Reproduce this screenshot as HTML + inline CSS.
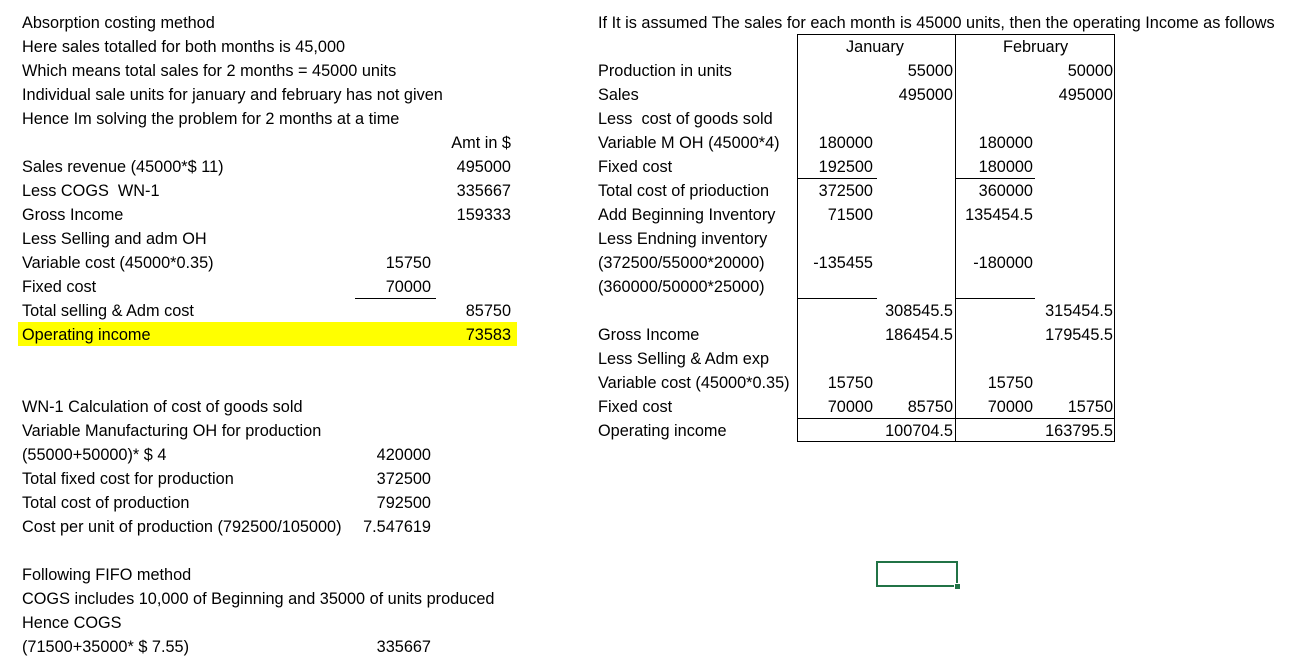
<!DOCTYPE html>
<html><head><meta charset="utf-8"><style>
body{margin:0;width:1293px;height:665px;background:#fff;position:relative;overflow:hidden;font-family:"Liberation Sans",Calibri,sans-serif;font-size:16.3px;color:#000}
.t{position:absolute;height:24px;line-height:26px;white-space:nowrap}
.r{position:absolute;height:24px;line-height:26px;white-space:nowrap;text-align:right;width:150px}
.l{position:absolute;background:#000}
</style></head><body>
<div style="position:absolute;left:18px;top:322px;width:499px;height:24px;background:#ffff00"></div>

<div class="t" style="left:22px;top:10px">Absorption costing method</div>
<div class="t" style="left:22px;top:34px">Here sales totalled for both months is 45,000</div>
<div class="t" style="left:22px;top:58px">Which means total sales for 2 months = 45000 units</div>
<div class="t" style="left:22px;top:82px">Individual sale units for january and february has not given</div>
<div class="t" style="left:22px;top:106px">Hence Im solving the problem for 2 months at a time</div>
<div class="r" style="left:361px;top:130px">Amt in $</div>
<div class="t" style="left:22px;top:154px">Sales revenue (45000*$ 11)</div><div class="r" style="left:361px;top:154px">495000</div>
<div class="t" style="left:22px;top:178px">Less COGS&nbsp; WN-1</div><div class="r" style="left:361px;top:178px">335667</div>
<div class="t" style="left:22px;top:202px">Gross Income</div><div class="r" style="left:361px;top:202px">159333</div>
<div class="t" style="left:22px;top:226px">Less Selling and adm OH</div>
<div class="t" style="left:22px;top:250px">Variable cost (45000*0.35)</div><div class="r" style="left:281px;top:250px">15750</div>
<div class="t" style="left:22px;top:274px">Fixed cost</div><div class="r" style="left:281px;top:274px">70000</div>
<div class="l" style="left:355px;top:298px;width:81px;height:1px"></div>
<div class="t" style="left:22px;top:298px">Total selling &amp; Adm cost</div><div class="r" style="left:361px;top:298px">85750</div>
<div class="t" style="left:22px;top:322px">Operating income</div><div class="r" style="left:361px;top:322px">73583</div>

<div class="t" style="left:22px;top:394px">WN-1 Calculation of cost of goods sold</div>
<div class="t" style="left:22px;top:418px">Variable Manufacturing OH for production</div>
<div class="t" style="left:22px;top:442px">(55000+50000)* $ 4</div><div class="r" style="left:281px;top:442px">420000</div>
<div class="t" style="left:22px;top:466px">Total fixed cost for production</div><div class="r" style="left:281px;top:466px">372500</div>
<div class="t" style="left:22px;top:490px">Total cost of production</div><div class="r" style="left:281px;top:490px">792500</div>
<div class="t" style="left:22px;top:514px">Cost per unit of production (792500/105000)</div><div class="r" style="left:281px;top:514px">7.547619</div>
<div class="t" style="left:22px;top:562px">Following FIFO method</div>
<div class="t" style="left:22px;top:586px">COGS includes 10,000 of Beginning and 35000 of units produced</div>
<div class="t" style="left:22px;top:610px">Hence COGS</div>
<div class="t" style="left:22px;top:634px">(71500+35000* $ 7.55)</div><div class="r" style="left:281px;top:634px">335667</div>

<div class="t" style="left:598px;top:10px">If It is assumed The sales for each month is 45000 units, then the operating Income as follows</div>
<div class="l" style="left:797px;top:34px;width:318px;height:1px"></div>
<div class="l" style="left:797px;top:34px;width:1px;height:408px"></div>
<div class="l" style="left:955px;top:34px;width:1px;height:408px"></div>
<div class="l" style="left:1114px;top:34px;width:1px;height:408px"></div>
<div class="l" style="left:797px;top:441px;width:318px;height:1px"></div>
<div class="l" style="left:797px;top:178px;width:80px;height:1px"></div>
<div class="l" style="left:955px;top:178px;width:80px;height:1px"></div>
<div class="l" style="left:797px;top:298px;width:80px;height:1px"></div>
<div class="l" style="left:955px;top:298px;width:80px;height:1px"></div>
<div class="l" style="left:797px;top:418px;width:318px;height:1px"></div>
<div class="t" style="left:846px;top:34px">January</div>
<div class="t" style="left:1003px;top:34px">February</div>

<div class="t" style="left:598px;top:58px">Production in units</div><div class="r" style="left:803px;top:58px">55000</div><div class="r" style="left:963px;top:58px">50000</div>
<div class="t" style="left:598px;top:82px">Sales</div><div class="r" style="left:803px;top:82px">495000</div><div class="r" style="left:963px;top:82px">495000</div>
<div class="t" style="left:598px;top:106px">Less&nbsp; cost of goods sold</div>
<div class="t" style="left:598px;top:130px">Variable M OH (45000*4)</div><div class="r" style="left:723px;top:130px">180000</div><div class="r" style="left:883px;top:130px">180000</div>
<div class="t" style="left:598px;top:154px">Fixed cost</div><div class="r" style="left:723px;top:154px">192500</div><div class="r" style="left:883px;top:154px">180000</div>
<div class="t" style="left:598px;top:178px">Total cost of prioduction</div><div class="r" style="left:723px;top:178px">372500</div><div class="r" style="left:883px;top:178px">360000</div>
<div class="t" style="left:598px;top:202px">Add Beginning Inventory</div><div class="r" style="left:723px;top:202px">71500</div><div class="r" style="left:883px;top:202px">135454.5</div>
<div class="t" style="left:598px;top:226px">Less Endning inventory</div>
<div class="t" style="left:598px;top:250px">(372500/55000*20000)</div><div class="r" style="left:723px;top:250px">-135455</div><div class="r" style="left:883px;top:250px">-180000</div>
<div class="t" style="left:598px;top:274px">(360000/50000*25000)</div>
<div class="r" style="left:803px;top:298px">308545.5</div><div class="r" style="left:963px;top:298px">315454.5</div>
<div class="t" style="left:598px;top:322px">Gross Income</div><div class="r" style="left:803px;top:322px">186454.5</div><div class="r" style="left:963px;top:322px">179545.5</div>
<div class="t" style="left:598px;top:346px">Less Selling &amp; Adm exp</div>
<div class="t" style="left:598px;top:370px">Variable cost (45000*0.35)</div><div class="r" style="left:723px;top:370px">15750</div><div class="r" style="left:883px;top:370px">15750</div>
<div class="t" style="left:598px;top:394px">Fixed cost</div><div class="r" style="left:723px;top:394px">70000</div><div class="r" style="left:803px;top:394px">85750</div><div class="r" style="left:883px;top:394px">70000</div><div class="r" style="left:963px;top:394px">15750</div>
<div class="t" style="left:598px;top:418px">Operating income</div><div class="r" style="left:803px;top:418px">100704.5</div><div class="r" style="left:963px;top:418px">163795.5</div>

<div style="position:absolute;left:876px;top:561px;width:78px;height:22px;border:2px solid #217346"></div>
<div style="position:absolute;left:954px;top:583px;width:5px;height:5px;background:#217346;border:1px solid #fff"></div>
</body></html>
